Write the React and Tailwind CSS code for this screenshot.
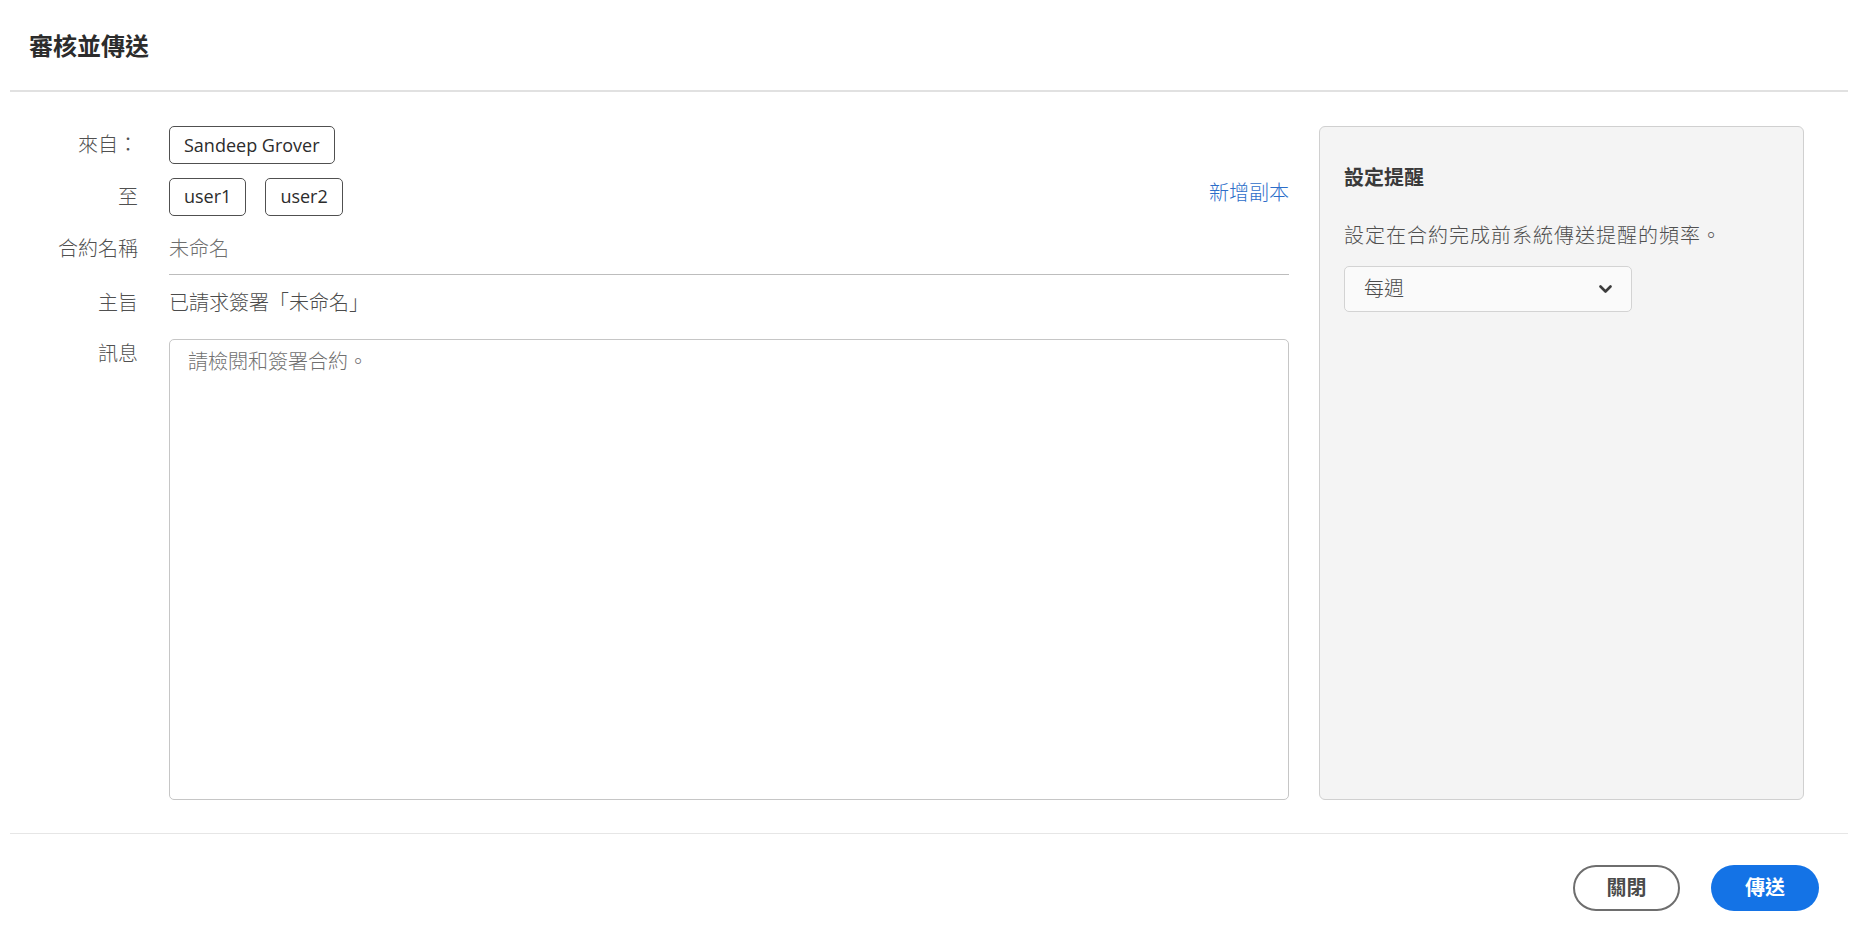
import React from "react";

const FONT = { fontFamily: '"Open Sans", "Noto Sans CJK TC", "Noto Sans", sans-serif' };

function Chip({ children }) {
  return (
    <div className="h-[38px] flex items-center px-[14px] border border-[#505050] rounded-[5px] text-[18px] text-[#2c2c2c]">
      {children}
    </div>
  );
}

function Label({ children, className = "" }) {
  return (
    <div className={"w-[128px] shrink-0 text-right text-[20px] leading-[30px] font-light text-[#505050] " + className}>
      {children}
    </div>
  );
}

export default function App() {
  return (
    <div className="w-[1855px] h-[939px] bg-white overflow-hidden" style={FONT}>
      <div className="ml-[10px] w-[1838px]">
        {/* Header */}
        <div className="h-[92px] border-b-2 border-[#e1e1e1] pl-[19px] pt-[30px]">
          <div className="text-[24px] leading-[32px] font-bold text-[#2c2c2c]">審核並傳送</div>
        </div>

        {/* Body */}
        <div className="flex pt-[34px] pb-[33px] pr-[44px] gap-[30px]">
          {/* Form */}
          <div className="w-[1279px] flex flex-col">
            <div className="flex items-center h-[38px] gap-[31px]">
              <Label>來自：</Label>
              <Chip>Sandeep Grover</Chip>
            </div>
            <div className="flex items-center h-[39px] mt-[13px] gap-[31px]">
              <Label>至</Label>
              <div className="flex-1 flex items-center">
                <div className="flex gap-[19px]">
                  <Chip>user1</Chip>
                  <Chip>user2</Chip>
                </div>
                <div className="ml-auto -mt-[8px] text-[20px] leading-[30px] font-light text-[#2d6ec9]">新增副本</div>
              </div>
            </div>
            <div className="flex mt-[10px] gap-[31px]">
              <Label className="pt-[8px]">合約名稱</Label>
              <div className="flex-1 h-[49px] border-b border-[#bdbdbd] pt-[8px] text-[20px] leading-[30px] font-light text-[#6e6e6e]">
                未命名
              </div>
            </div>
            <div className="flex mt-[13px] gap-[31px]">
              <Label>主旨</Label>
              <div className="flex-1 text-[20px] leading-[30px] font-light text-[#4b4b4b]">已請求簽署「未命名」</div>
            </div>
            <div className="flex mt-[21px] gap-[31px]">
              <Label>訊息</Label>
              <div className="flex-1 h-[461px] border border-[#c6c6c6] rounded-[5px] pl-[18px] pt-[7px] text-[20px] leading-[30px] font-light text-[#707070]">
                請檢閱和簽署合約。
              </div>
            </div>
          </div>

          {/* Reminder panel */}
          <div className="w-[485px] h-[674px] bg-[#f4f4f4] border border-[#d0d0d0] rounded-[6px] pl-[24px] pt-[36px]">
            <div className="text-[20px] leading-[30px] font-bold text-[#3a3a3a]">設定提醒</div>
            <div className="mt-[28px] text-[20px] leading-[30px] tracking-[1px] font-light text-[#505050]">
              設定在合約完成前系統傳送提醒的頻率。
            </div>
            <div className="mt-[15px] w-[288px] h-[46px] bg-[#fafafa] border border-[#d3d3d3] rounded-[5px] flex items-center pl-[19px] pr-[19px]">
              <span className="text-[20px] leading-[30px] font-light text-[#4b4b4b]">每週</span>
              <svg className="ml-auto" width="13" height="9" viewBox="0 0 13 9">
                <polyline points="1.5,1.5 6.5,6.5 11.5,1.5" fill="none" stroke="#3c3c3c" strokeWidth="2.6" strokeLinecap="round" strokeLinejoin="round" />
              </svg>
            </div>
          </div>
        </div>

        {/* Footer */}
        <div className="border-t border-[#e6e6e6] pt-[31px] pr-[29px] flex justify-end gap-[31px]">
          <button className="w-[107px] h-[46px] rounded-full border-2 border-[#6e6e6e] bg-white text-[20px] font-bold text-[#4b4b4b]" style={FONT}>
            關閉
          </button>
          <button className="w-[108px] h-[46px] rounded-full bg-[#1473e6] text-[20px] font-bold text-white" style={FONT}>
            傳送
          </button>
        </div>
      </div>
    </div>
  );
}
